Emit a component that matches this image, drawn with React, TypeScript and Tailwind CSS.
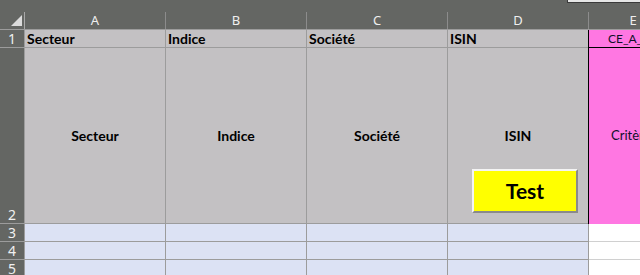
import React from "react";

const cols = ["A", "B", "C", "D"];
const hdr = ["Secteur", "Indice", "Société", "ISIN"];

export default function App() {
  const cellFont = { fontFamily: "Lato, 'Noto Sans', sans-serif" };
  const uiFont = { fontFamily: "'Noto Sans', 'DejaVu Sans', sans-serif" };
  return (
    <div className="w-[640px] h-[275px] overflow-hidden bg-[#646663] flex flex-col">
      {/* top strip */}
      <div className="h-[12px] shrink-0 flex justify-end">
        <div className="w-[73px] h-[3px] bg-[#e6e6e6] border-l border-b border-[#3a3a3a]" />
      </div>
      {/* column headers */}
      <div className="flex h-[18px] shrink-0 border-b border-[#9c9c9c]" style={uiFont}>
        <div className="relative w-[25px] shrink-0 border-r border-[#a8a8a8]">
          <div className="absolute right-[2px] bottom-[3px] w-0 h-0 border-l-[11px] border-l-transparent border-b-[11px] border-b-[#dcdcdc]" />
        </div>
        {cols.map((c) => (
          <div
            key={c}
            className="w-[141px] shrink-0 border-r border-[#8c8c8c] flex items-center justify-center text-[13px] text-[#efefef] leading-none"
          >
            {c}
          </div>
        ))}
        <div className="w-[88px] shrink-0 flex items-center justify-center text-[13px] text-[#efefef] leading-none">
          E
        </div>
      </div>
      {/* row 1 */}
      <div className="flex h-[18px] shrink-0" style={cellFont}>
        <div className="w-[25px] shrink-0 border-r border-b border-[#9c9c9c] flex items-center justify-center text-[14px] text-[#f0f0f0]" style={uiFont}>1</div>
        {hdr.map((h, i) => (
          <div key={h} className={i === 3 ? "w-[140px] shrink-0 bg-[#c3c1c3] border-b border-[#9c9c9c] flex items-center pl-[2px] text-[14px] font-bold text-black overflow-hidden whitespace-nowrap" : "w-[141px] shrink-0 bg-[#c3c1c3] border-r border-b border-[#9c9c9c] flex items-center pl-[2px] text-[14px] font-bold text-black overflow-hidden whitespace-nowrap"}>
            {h}
          </div>
        ))}
        <div className="w-[52px] shrink-0 bg-[#ff77e2] border-l border-b border-[#000000] flex items-center pl-[19px] text-[12px] text-[#10102a] overflow-hidden whitespace-nowrap">
          CE_A_
        </div>
      </div>
      {/* row 2 */}
      <div className="flex h-[176px] shrink-0" style={cellFont}>
        <div className="w-[25px] shrink-0 border-r border-b border-[#9c9c9c] flex items-end justify-center pb-[1px] text-[14px] text-[#f0f0f0] leading-none" style={uiFont}>2</div>
        {hdr.map((h, i) => (
          <div key={h} className={i === 3 ? "relative w-[140px] shrink-0 bg-[#c3c1c3] border-b border-[#9c9c9c] flex items-center justify-center text-[14px] font-bold text-black" : "relative w-[141px] shrink-0 bg-[#c3c1c3] border-r border-b border-[#9c9c9c] flex items-center justify-center text-[14px] font-bold text-black"}>
            {h}
            {i === 3 && (
              <div className="absolute left-[24px] top-[121px] w-[106px] h-[44px] bg-[#ffff00] border-t-2 border-l-2 border-[#f4f4f4] border-r-2 border-b-2 border-r-[#8a8a8a] border-b-[#8a8a8a] flex items-center justify-center text-[21px] font-bold text-black">
                Test
              </div>
            )}
          </div>
        ))}
        <div className="w-[52px] shrink-0 bg-[#ff77e2] border-l border-[#000000] flex items-center pl-[22px] text-[13px] text-[#10102a] overflow-hidden whitespace-nowrap">
          Critère
        </div>
      </div>
      {/* rows 3-5 */}
      {[3, 4, 5].map((r) => (
        <div key={r} className="flex h-[18px] shrink-0" style={cellFont}>
          <div className="w-[25px] shrink-0 border-r border-b border-[#9c9c9c] flex items-center justify-center text-[14px] text-[#f0f0f0]" style={uiFont}>{r}</div>
          {hdr.map((h) => (
            <div key={h} className="w-[141px] shrink-0 bg-[#dce2f4] border-r border-b border-[#9c9c9c]" />
          ))}
          <div className="w-[52px] shrink-0 bg-white border-b border-[#d0d0d0]" />
        </div>
      ))}
    </div>
  );
}
